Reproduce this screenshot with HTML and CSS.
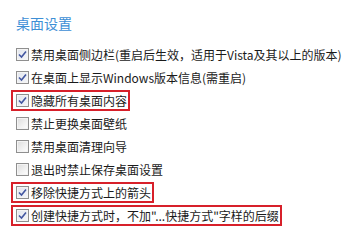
FILE: index.html
```html
<!DOCTYPE html>
<html>
<head>
<meta charset="utf-8">
<link rel="stylesheet" href="styles.css">
</head>
<body>
<div class="panel">
  <div class="title">桌面设置</div>
  <div class="list">
    <div class="row"><span class="cb on"><svg viewBox="0 0 11 11" width="11" height="11"><path d="M2 5.5 L4.5 8 L9 2.5" fill="none" stroke="#4256a0" stroke-width="1.6"/></svg></span><span class="lbl">禁用桌面侧边栏(重启后生效，适用于Vista及其以上的版本)</span></div>
    <div class="row"><span class="cb on"><svg viewBox="0 0 11 11" width="11" height="11"><path d="M2 5.5 L4.5 8 L9 2.5" fill="none" stroke="#4256a0" stroke-width="1.6"/></svg></span><span class="lbl">在桌面上显示Windows版本信息(需重启)</span></div>
    <div class="row hl"><span class="cb on"><svg viewBox="0 0 11 11" width="11" height="11"><path d="M2 5.5 L4.5 8 L9 2.5" fill="none" stroke="#4256a0" stroke-width="1.6"/></svg></span><span class="lbl">隐藏所有桌面内容</span></div>
    <div class="row"><span class="cb"></span><span class="lbl">禁止更换桌面壁纸</span></div>
    <div class="row"><span class="cb"></span><span class="lbl">禁用桌面清理向导</span></div>
    <div class="row"><span class="cb"></span><span class="lbl">退出时禁止保存桌面设置</span></div>
    <div class="row hl"><span class="cb on"><svg viewBox="0 0 11 11" width="11" height="11"><path d="M2 5.5 L4.5 8 L9 2.5" fill="none" stroke="#4256a0" stroke-width="1.6"/></svg></span><span class="lbl">移除快捷方式上的箭头</span></div>
    <div class="row hl"><span class="cb on"><svg viewBox="0 0 11 11" width="11" height="11"><path d="M2 5.5 L4.5 8 L9 2.5" fill="none" stroke="#4256a0" stroke-width="1.6"/></svg></span><span class="lbl">创建快捷方式时，不加"...快捷方式"字样的后缀</span></div>
  </div>
</div>
</body>
</html>
```
FILE: styles.css
```css
html, body {
  margin: 0;
  padding: 0;
  background: #ffffff;
}
body {
  width: 362px;
  height: 231px;
  overflow: hidden;
  font-family: "Noto Sans CJK SC", "Noto Sans", sans-serif;
}
.panel {
  padding: 13px 0 0 11px;
}
.title {
  margin-left: 5px;
  font-size: 14px;
  line-height: 20px;
  color: #3d8fd6;
}
.list {
  margin-top: 11px;
  display: flex;
  flex-direction: column;
  align-items: flex-start;
  gap: 2px;
}
.row {
  display: flex;
  align-items: center;
  height: 21px;
  box-sizing: border-box;
  border: 2px solid transparent;
  padding: 0 1px 0 3px;
}
.row.hl {
  border-color: #d7202a;
}
.cb {
  width: 13px;
  height: 13px;
  box-sizing: border-box;
  border: 1px solid #8f8f8f;
  background: linear-gradient(135deg, #dcdcdc 0%, #f2f2f2 60%, #ffffff 100%);
  box-shadow: inset 0 0 0 1px #f4f4f4;
  display: flex;
  align-items: center;
  justify-content: center;
  flex: none;
}
.cb.on {
  background: linear-gradient(135deg, #e2e6ee 0%, #f4f5f8 100%);
}
.cb svg {
  display: block;
}
.lbl {
  margin-left: 2px;
  font-size: 12px;
  line-height: 17px;
  color: #1a1a1a;
  white-space: nowrap;
}
```
